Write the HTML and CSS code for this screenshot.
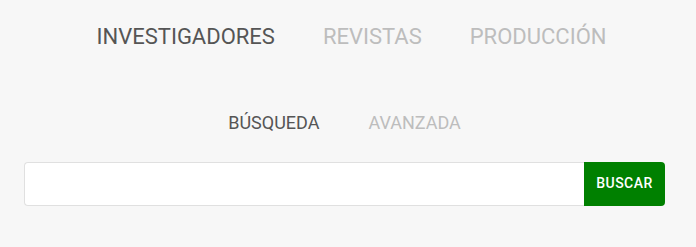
FILE: index.html
```html
<!DOCTYPE html>
<html lang="es">
<head>
<meta charset="utf-8">
<link rel="stylesheet" href="styles.css">
</head>
<body>
<div class="page">
  <nav class="tabs">
    <a class="tab active">INVESTIGADORES</a>
    <a class="tab">REVISTAS</a>
    <a class="tab">PRODUCCIÓN</a>
  </nav>
  <nav class="subtabs">
    <a class="subtab active">BÚSQUEDA</a>
    <a class="subtab">AVANZADA</a>
  </nav>
  <form class="search">
    <input class="search-input" type="text">
    <button class="search-btn" type="button">BUSCAR</button>
  </form>
</div>
</body>
</html>
```
FILE: styles.css
```css
html, body {
  margin: 0;
  padding: 0;
  background: #f7f7f7;
  font-family: Roboto, "Noto Sans", sans-serif;
}
.page {
  padding: 22px 31px 0 24px;
}
.tabs {
  display: flex;
  justify-content: center;
  gap: 48px;
  padding-left: 14px;
}
.tab {
  font-size: 22px;
  line-height: 30px;
  color: #bdbdbd;
}
.tab.active { color: #555; }
.subtabs {
  display: flex;
  justify-content: center;
  gap: 49px;
  margin-top: 61px;
}
.subtab {
  font-size: 18px;
  line-height: 20px;
  color: #bdbdbd;
}
.subtab.active { color: #555; }
.search {
  display: flex;
  margin-top: 29px;
  height: 44px;
}
.search-input {
  flex: 1;
  box-sizing: border-box;
  height: 44px;
  border: 1px solid #e0e0e0;
  border-right: none;
  border-radius: 4px 0 0 4px;
  background: #fff;
  margin: 0;
  outline: none;
}
.search-btn {
  width: 81px;
  height: 44px;
  border: none;
  border-radius: 0 4px 4px 0;
  background: #008000;
  color: #fff;
  font-family: Roboto, sans-serif;
  font-weight: 500;
  font-size: 14px;
  letter-spacing: 0.5px;
  margin: 0;
  padding: 0 0 2px 0;
}
```
